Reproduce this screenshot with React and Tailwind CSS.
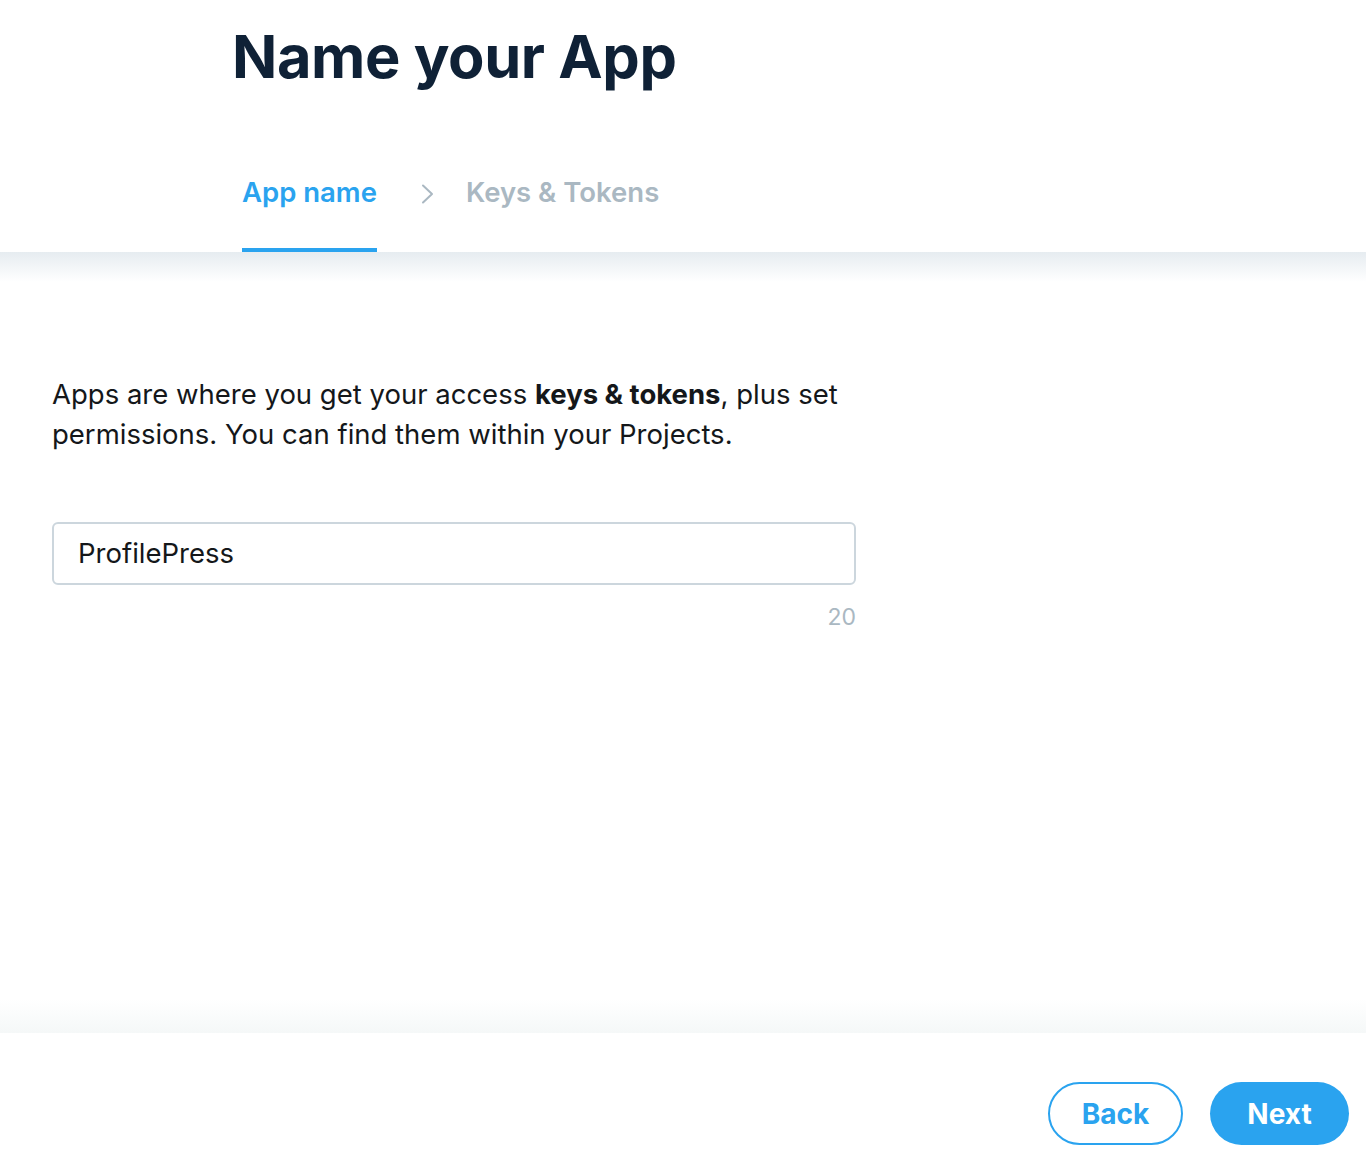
import React from "react";

export default function App() {
  return (
    <div className="flex h-[1166px] w-full flex-col bg-white text-[#14171a]" style={{ fontFamily: "Inter, 'Noto Sans', sans-serif" }}>
      <header className="relative bg-white">
        <div className="pl-[232px] pt-[18px]">
          <h1 className="text-[59.5px] font-bold leading-[76px] tracking-[-0.4px] text-[#0f2136]">Name your App</h1>
        </div>
        <nav className="mt-[78px] flex items-end pl-[242px]">
          <div className="flex flex-col">
            <span className="text-[27.5px] font-semibold leading-[40px] text-[#2aa3ef]">App name</span>
            <div className="mt-[36px] h-[4px] w-full bg-[#2aa3ef]" />
          </div>
          <div className="mb-[48px] ml-[44px] mr-[31px] flex items-center">
            <svg width="14" height="20" viewBox="0 0 14 20" fill="none">
              <path d="M2 1.5 L11 10 L2 18.5" stroke="#aab8c2" strokeWidth="2" strokeLinecap="round" strokeLinejoin="round" />
            </svg>
          </div>
          <div className="flex flex-col">
            <span className="text-[27.5px] font-semibold leading-[40px] text-[#aab8c2]">Keys &amp; Tokens</span>
            <div className="mt-[36px] h-[4px] w-full bg-transparent" />
          </div>
        </nav>
      </header>
      <main className="flex-1 bg-gradient-to-b from-[#e6ecf0] via-white via-[30px] to-white">
        <div className="w-[860px] pl-[52px] pt-[122px]">
          <p className="text-[27.5px] leading-[40px] text-[#14171a]">
            Apps are where you get your access <b className="font-bold">keys &amp; tokens</b>, plus set permissions. You can find them within your Projects.
          </p>
        </div>
        <div className="mt-[68px] w-[856px] pl-[52px]">
          <div className="flex h-[63px] items-center rounded-[6px] border-2 border-[#ccd6dd] px-[24px]">
            <span className="text-[27.5px] text-[#14171a]">ProfilePress</span>
          </div>
          <div className="mt-[17px] text-right text-[23px] leading-[30px] text-[#aab8c2]">20</div>
        </div>
      </main>
      <div className="h-[34px] bg-gradient-to-b from-white to-[#f5f8f8]" />
      <footer className="flex h-[133px] items-start justify-end gap-[27px] bg-white pr-[17px] pt-[49px]">
        <button className="h-[63px] w-[135px] rounded-full border-2 border-[#2aa3ef] text-[28px] font-bold text-[#2aa3ef]">Back</button>
        <button className="h-[63px] w-[139px] rounded-full bg-[#2aa3ef] text-[28px] font-bold text-white">Next</button>
      </footer>
    </div>
  );
}
